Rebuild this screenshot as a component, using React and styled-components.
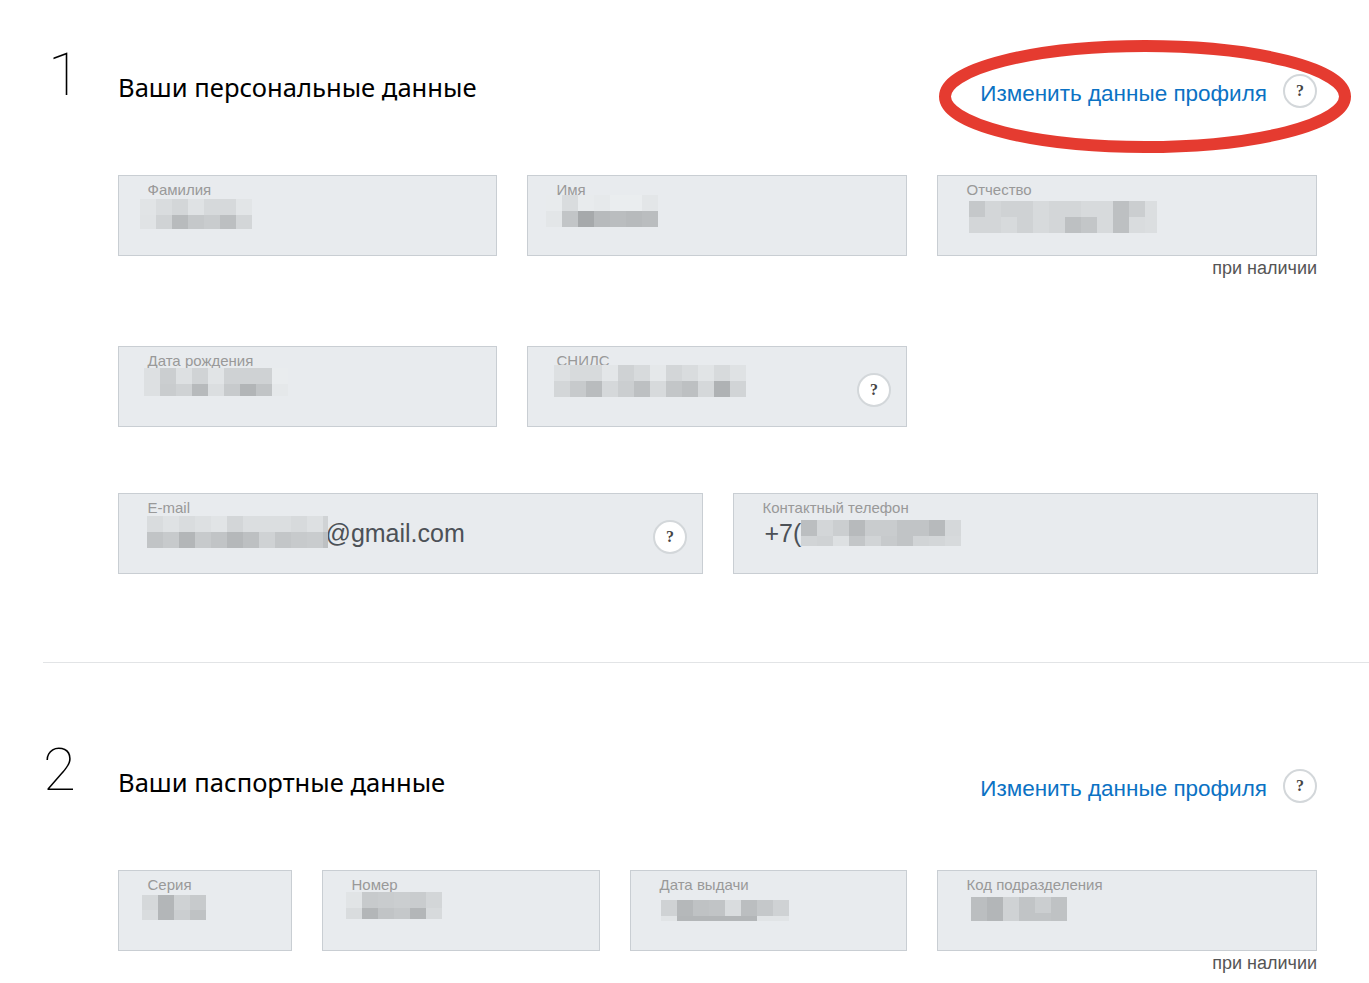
import React from 'react'
import styled, { createGlobalStyle } from 'styled-components'

const GlobalStyle = createGlobalStyle`
  html, body {
    margin: 0;
    padding: 0;
    background: #fff;
    font-family: "Liberation Sans", Arial, sans-serif;
  }
`

const Page = styled.div`
  width: 1369px;
  padding: 0 0 8px 43px;
  box-sizing: border-box;
  overflow: hidden;
`

const Section = styled.section`
  display: grid;
  grid-template-columns: 75px 1200px;
  padding-top: 40px;
`

const StepNumber = styled.div`
  padding-left: ${(p) => p.$shift || 0}px;
  font-family: Roboto, sans-serif;
  font-weight: 100;
  font-size: 60px;
  line-height: 70px;
  color: #000;
`

const Content = styled.div`
  min-width: 0;
`

const Header = styled.header`
  position: relative;
  display: flex;
  justify-content: space-between;
  align-items: flex-start;
  height: 135px;
`

const Title = styled.h2`
  margin: 31px 0 0;
  font-family: "Noto Sans", sans-serif;
  font-weight: 400;
  font-size: 25.6px;
  line-height: 34px;
  color: #000;
`

const ProfileLink = styled.div`
  display: flex;
  align-items: flex-start;
  gap: 16px;
  margin: 34px 1px 0 0;
`

const EditLink = styled.a`
  margin-top: 1px;
  font-size: 22.5px;
  line-height: 38px;
  color: #0b72c4;
  text-decoration: none;
`

const HelpButton = styled.span`
  display: flex;
  align-items: center;
  justify-content: center;
  width: 34px;
  height: 34px;
  box-sizing: border-box;
  border: 2px solid #d3d7da;
  border-radius: 50%;
  background: #fff;
  font-family: "Liberation Serif", serif;
  font-weight: 700;
  font-size: 16px;
  color: #444;
`

const FieldHelp = styled(HelpButton)`
  position: absolute;
  right: 15px;
  top: 26px;
`

const Oval = styled.svg`
  position: absolute;
  left: 817px;
  top: -4px;
  pointer-events: none;
`

const Row = styled.div`
  display: grid;
  grid-template-columns: ${(p) => p.$columns};
  column-gap: 30px;
  align-items: start;
  margin-bottom: ${(p) => p.$after || 0}px;
`

const FieldCell = styled.div`
  display: flex;
  flex-direction: column;
`

const Field = styled.div`
  position: relative;
  height: 81px;
  box-sizing: border-box;
  padding: 5px 10px 0 28.5px;
  border: 1px solid #c9ced3;
  background: #e8ebee;
`

const Label = styled.div`
  font-size: 15px;
  line-height: 18px;
  color: #999;
`

const Value = styled.div`
  margin-left: ${(p) => p.$indent || 0}px;
  font-size: 25px;
  line-height: 32px;
  color: #4c5157;
`

const Note = styled.div`
  font-size: 18px;
  line-height: 24px;
  text-align: right;
  color: #555;
`

const Divider = styled.hr`
  height: 1px;
  margin: 88px 0 32px;
  border: 0;
  background: #e2e4e6;
`

const Mosaic = styled.div`
  position: absolute;
  left: ${(p) => p.$left}px;
  top: ${(p) => p.$top}px;
  width: ${(p) => p.$width}px;
  display: flex;
  flex-direction: column;
  overflow: hidden;
`

const MosaicRow = styled.div`
  display: flex;
  height: ${(p) => p.$height}px;
`

const MosaicCell = styled.div`
  flex: 0 0 16px;
  background: ${(p) => `rgb(${p.$shade + 3}, ${p.$shade + 6}, ${p.$shade + 8})`};
`

const blur = {
  surname: { left: 21, top: 23, width: 112, heights: [16, 14], rows: [
    [222, 214, 208, 220, 211, 211, 223],
    [221, 205, 181, 194, 198, 185, 208],
  ] },
  name: { left: 18, top: 19, width: 112, heights: [16, 16], rows: [
    [229, 214, 229, 227, 231, 231, 224],
    [224, 191, 163, 180, 183, 180, 183],
  ] },
  patronymic: { left: 31, top: 25, width: 188, heights: [16, 16], rows: [
    [194, 208, 204, 204, 212, 208, 208, 212, 212, 186, 200, 216],
    [208, 208, 212, 204, 212, 208, 186, 192, 212, 186, 214, 216],
  ] },
  birth: { left: 25, top: 21, width: 144, heights: [16, 12], rows: [
    [218, 200, 218, 205, 222, 204, 204, 204, 230],
    [218, 198, 204, 180, 216, 196, 175, 190, 226],
  ] },
  snils: { left: 26, top: 18, width: 192, heights: [16, 16], rows: [
    [218, 212, 212, 224, 204, 212, 226, 208, 214, 222, 212, 220],
    [208, 196, 182, 210, 200, 186, 212, 192, 186, 210, 172, 206],
  ] },
  email: { left: 28, top: 22, width: 181, heights: [16, 16], rows: [
    [214, 220, 214, 218, 222, 208, 216, 216, 216, 212, 218, 205],
    [190, 196, 176, 196, 190, 178, 186, 204, 192, 196, 198, 186],
  ] },
  phone: { left: 67, top: 26, width: 160, heights: [16, 10], rows: [
    [184, 208, 200, 180, 198, 198, 190, 190, 180, 210],
    [206, 204, 218, 192, 206, 196, 190, 206, 208, 212],
  ] },
  series: { left: 23, top: 24, width: 64, heights: [15, 10], rows: [
    [210, 176, 204, 196],
    [214, 176, 200, 188],
  ] },
  number: { left: 23, top: 21, width: 96, heights: [16, 11], rows: [
    [222, 196, 198, 200, 198, 208],
    [214, 176, 190, 194, 176, 212],
  ] },
  issued: { left: 30, top: 29, width: 128, heights: [16, 5], rows: [
    [204, 178, 188, 190, 214, 184, 194, 204],
    [222, 176, 176, 176, 176, 176, 222, 222],
  ] },
  code: { left: 33, top: 26, width: 96, heights: [16, 8], rows: [
    [184, 176, 204, 190, 200, 188],
    [184, 176, 204, 190, 190, 188],
  ] },
}

function Blur({ data }) {
  return (
    <Mosaic $left={data.left} $top={data.top} $width={data.width}>
      {data.rows.map((row, i) => (
        <MosaicRow key={i} $height={data.heights[i]}>
          {row.map((shade, j) => <MosaicCell key={j} $shade={shade} />)}
        </MosaicRow>
      ))}
    </Mosaic>
  )
}

function DataField({ label, value, indent, blurred, help, note }) {
  return (
    <FieldCell>
      <Field>
        <Label>{label}</Label>
        {value && <Value $indent={indent}>{value}</Value>}
        <Blur data={blurred} />
        {help && <FieldHelp>?</FieldHelp>}
      </Field>
      {note && <Note>{note}</Note>}
    </FieldCell>
  )
}

function SectionHeader({ title, circled }) {
  return (
    <Header>
      <Title>{title}</Title>
      <ProfileLink>
        <EditLink href="#">Изменить данные профиля</EditLink>
        <HelpButton>?</HelpButton>
      </ProfileLink>
      {circled && (
        <Oval width="420" height="122" viewBox="0 0 420 122">
          <ellipse cx="210" cy="60.5" rx="200" ry="50.5" fill="none" stroke="#e53b30" strokeWidth="12" />
        </Oval>
      )}
    </Header>
  )
}

export default function App() {
  return (
    <>
      <GlobalStyle />
      <Page>
        <Section>
          <StepNumber $shift={5}>1</StepNumber>
          <Content>
            <SectionHeader title="Ваши персональные данные" circled />
            <Row $columns="379px 380px 380px" $after={66}>
              <DataField label="Фамилия" blurred={blur.surname} />
              <DataField label="Имя" blurred={blur.name} />
              <DataField label="Отчество" blurred={blur.patronymic} note="при наличии" />
            </Row>
            <Row $columns="379px 380px 380px" $after={66}>
              <DataField label="Дата рождения" blurred={blur.birth} />
              <DataField label="СНИЛС" blurred={blur.snils} help />
            </Row>
            <Row $columns="585px 585px">
              <DataField label="E-mail" value="@gmail.com" indent={178} blurred={blur.email} help />
              <DataField label="Контактный телефон" value="+7(" indent={2} blurred={blur.phone} />
            </Row>
          </Content>
        </Section>
        <Divider />
        <Section>
          <StepNumber>2</StepNumber>
          <Content>
            <SectionHeader title="Ваши паспортные данные" />
            <Row $columns="174px 278px 277px 380px">
              <DataField label="Серия" blurred={blur.series} />
              <DataField label="Номер" blurred={blur.number} />
              <DataField label="Дата выдачи" blurred={blur.issued} />
              <DataField label="Код подразделения" blurred={blur.code} note="при наличии" />
            </Row>
          </Content>
        </Section>
      </Page>
    </>
  )
}
